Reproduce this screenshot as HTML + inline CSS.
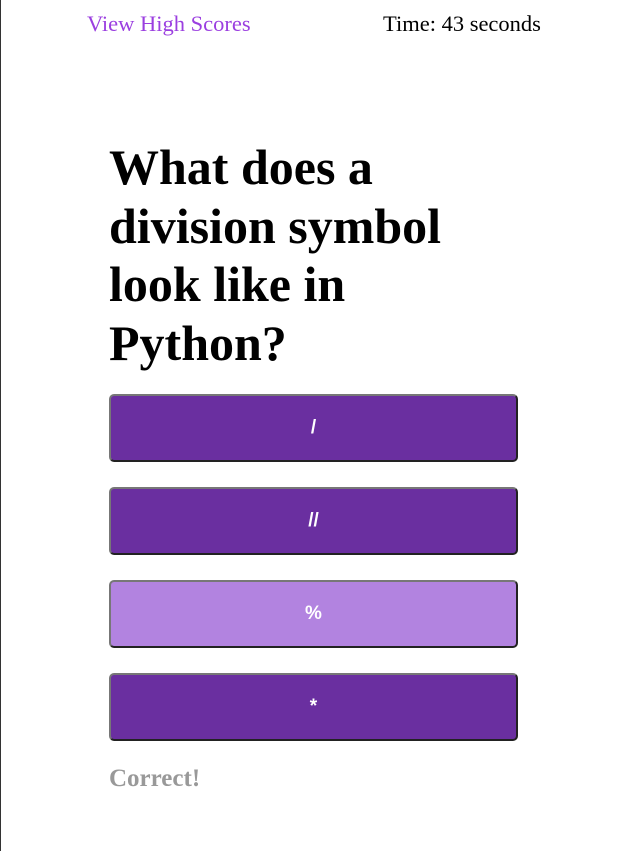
<!DOCTYPE html>
<html><head><meta charset="utf-8"><style>
html,body{margin:0;padding:0;}
body{width:620px;height:851px;background:#fff;position:relative;overflow:hidden;font-family:"Liberation Serif",serif;}
.ln{position:absolute;left:0;top:0;width:1px;height:851px;background:#333;}
.hs{position:absolute;left:87px;top:11px;font-size:22.5px;color:#9b3fe0;}
.tm{position:absolute;left:383px;top:11px;font-size:22.5px;color:#000;}
h1{position:absolute;left:109px;top:138px;width:409px;margin:0;font-size:50px;line-height:58.5px;font-weight:bold;}
.b{position:absolute;left:109px;width:409px;height:68px;box-sizing:border-box;background:#6a2fa0;border:2px solid;border-color:#777 #222 #222 #777;border-radius:5px;color:#fff;font-family:"Liberation Sans",sans-serif;font-size:19px;font-weight:bold;display:flex;align-items:center;justify-content:center;}
.c{position:absolute;left:109px;top:765px;font-size:25px;font-weight:bold;color:#999;}
</style></head><body>
<div class="ln"></div>
<div class="hs">View High Scores</div>
<div class="tm">Time: 43 seconds</div>
<h1>What does a division symbol look like in Python?</h1>
<div class="b" style="top:394px">/</div>
<div class="b" style="top:487px">//</div>
<div class="b" style="top:580px;background:#b283e0">%</div>
<div class="b" style="top:673px">*</div>
<div class="c">Correct!</div>
</body></html>
